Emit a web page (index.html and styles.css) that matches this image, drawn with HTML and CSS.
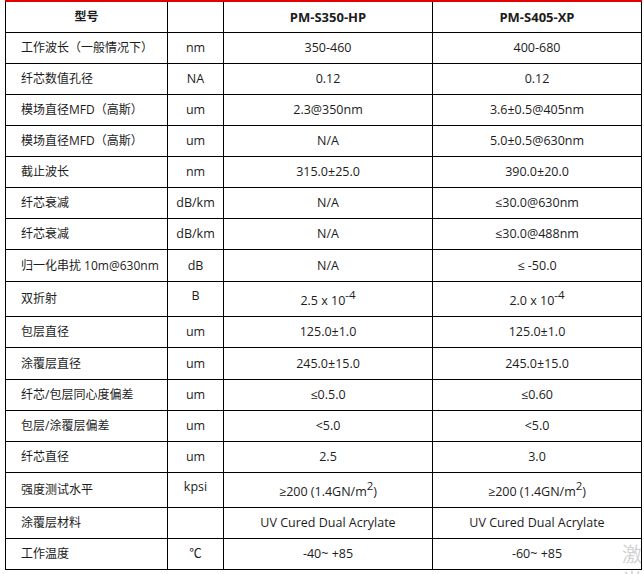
FILE: index.html
```html
<!DOCTYPE html>
<html lang="zh-CN">
<head>
<meta charset="utf-8">
<title>规格参数</title>
<link rel="stylesheet" href="styles.css">
</head>
<body>
<div class="wrap">
<table class="spec">
  <colgroup>
    <col class="c1"><col class="c2"><col class="c3"><col class="c4">
  </colgroup>
  <thead>
    <tr class="head">
      <th class="name center">型号</th>
      <th></th>
      <th>PM-S350-HP</th>
      <th>PM-S405-XP</th>
    </tr>
  </thead>
  <tbody>
    <tr><td class="name">工作波长（一般情况下）</td><td>nm</td><td>350-460</td><td>400-680</td></tr>
    <tr><td class="name">纤芯数值孔径</td><td>NA</td><td>0.12</td><td>0.12</td></tr>
    <tr><td class="name">模场直径MFD（高斯）</td><td>um</td><td>2.3@350nm</td><td>3.6±0.5@405nm</td></tr>
    <tr><td class="name">模场直径MFD（高斯）</td><td>um</td><td>N/A</td><td>5.0±0.5@630nm</td></tr>
    <tr><td class="name">截止波长</td><td>nm</td><td>315.0±25.0</td><td>390.0±20.0</td></tr>
    <tr><td class="name">纤芯衰减</td><td>dB/km</td><td>N/A</td><td>≤30.0@630nm</td></tr>
    <tr><td class="name">纤芯衰减</td><td>dB/km</td><td>N/A</td><td>≤30.0@488nm</td></tr>
    <tr class="r32"><td class="name">归一化串扰 10m@630nm</td><td>dB</td><td>N/A</td><td>≤ -50.0</td></tr>
    <tr class="tall"><td class="name">双折射</td><td class="top">B</td><td class="low">2.5 x 10<sup>-4</sup></td><td class="low">2.0 x 10<sup>-4</sup></td></tr>
    <tr><td class="name">包层直径</td><td>um</td><td>125.0±1.0</td><td>125.0±1.0</td></tr>
    <tr class="r32"><td class="name">涂覆层直径</td><td>um</td><td>245.0±15.0</td><td>245.0±15.0</td></tr>
    <tr><td class="name">纤芯/包层同心度偏差</td><td>um</td><td>≤0.5.0</td><td>≤0.60</td></tr>
    <tr><td class="name">包层/涂覆层偏差</td><td>um</td><td>&lt;5.0</td><td>&lt;5.0</td></tr>
    <tr><td class="name">纤芯直径</td><td>um</td><td>2.5</td><td>3.0</td></tr>
    <tr class="tall"><td class="name">强度测试水平</td><td class="top">kpsi</td><td class="low">≥200 (1.4GN/m<sup>2</sup>)</td><td class="low">≥200 (1.4GN/m<sup>2</sup>)</td></tr>
    <tr><td class="name">涂覆层材料</td><td></td><td>UV Cured Dual Acrylate</td><td>UV Cured Dual Acrylate</td></tr>
    <tr><td class="name">工作温度</td><td>℃</td><td>-40~ +85</td><td>-60~ +85</td></tr>
  </tbody>
</table>
<div class="mark">激<br>光</div>
</div>
</body>
</html>
```

FILE: styles.css
```css
html, body {
  margin: 0;
  padding: 0;
  background: #fff;
}
body {
  font-family: "Open Sans", "Noto Sans CJK SC", sans-serif;
  font-size: 12.5px;
  color: #1c1c1c;
}
.wrap {
  position: relative;
  width: 644px;
  height: 574px;
  overflow: hidden;
}
.spec {
  margin-left: 5px;
  border-collapse: collapse;
  table-layout: fixed;
  width: 636px;
  border-top: 2px solid #e00000;
}
.c1 { width: 162px; }
.c2 { width: 56px; }
.c3 { width: 209px; }
.c4 { width: 209px; }
.spec th, .spec td {
  border: 1px solid #000;
  padding: 0;
  height: 30px;
  text-align: center;
  vertical-align: middle;
  line-height: 16px;
  white-space: nowrap;
}
.spec thead th {
  border-top: 2px solid #e00000;
  font-weight: 700;
  font-size: 13px;
  height: 30px;
}
.spec td.name {
  text-align: left;
  padding-left: 15px;
  font-size: 12px;
}
.spec th.center { text-align: center; padding-left: 0; font-size: 12px; }
.spec tr.r32 td { height: 31px; }
.spec tr.tall td { height: 34px; }
.spec tr.tall td.top { vertical-align: top; padding-top: 6px; height: 28px; }
.spec tr.tall td.low { padding-top: 4px; height: 30px; }
sup {
  font-size: 11.5px;
  line-height: 0;
  position: relative;
  top: -1px;
}
.mark {
  position: absolute;
  right: 2px;
  top: 541px;
  font-family: "Noto Sans CJK SC", sans-serif;
  font-size: 20px;
  line-height: 26px;
  color: rgba(150,150,150,0.45);
}
```
